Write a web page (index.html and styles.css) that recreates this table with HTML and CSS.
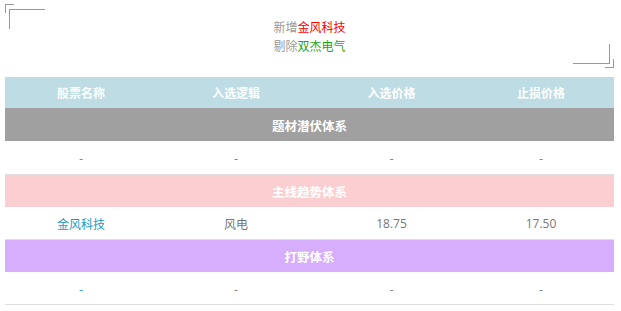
FILE: index.html
```html
<!DOCTYPE html>
<html lang="zh-CN">
<head>
<meta charset="utf-8">
<link rel="stylesheet" href="styles.css">
</head>
<body>
<div class="page">
  <div class="notice">
    <span class="corner corner-tl-small"></span>
    <span class="corner corner-tl"></span>
    <span class="corner corner-br"></span>
    <span class="corner corner-br-small"></span>
    <p class="line"><span class="muted">新增</span><span class="add">金风科技</span></p>
    <p class="line"><span class="muted">剔除</span><span class="remove">双杰电气</span></p>
  </div>
  <table class="stocks">
    <colgroup>
      <col class="c1"><col class="c2"><col class="c3"><col class="c4">
    </colgroup>
    <thead>
      <tr class="head">
        <th>股票名称</th><th>入选逻辑</th><th>入选价格</th><th>止损价格</th>
      </tr>
    </thead>
    <tbody>
      <tr class="cat cat-gray"><td colspan="4">题材潜伏体系</td></tr>
      <tr class="data first"><td class="name">-</td><td>-</td><td>-</td><td>-</td></tr>
      <tr class="cat cat-pink"><td colspan="4">主线趋势体系</td></tr>
      <tr class="data"><td class="name">金风科技</td><td>风电</td><td class="num">18.75</td><td class="num">17.50</td></tr>
      <tr class="cat cat-purple"><td colspan="4">打野体系</td></tr>
      <tr class="data"><td class="name">-</td><td>-</td><td>-</td><td>-</td></tr>
    </tbody>
  </table>
</div>
</body>
</html>
```
FILE: styles.css
```css
html, body {
  margin: 0;
  padding: 0;
  background: #fff;
}
body {
  font-family: "Noto Sans CJK SC", "Open Sans", sans-serif;
  font-size: 12px;
  color: #666;
}
.page {
  padding: 4px 7px 0 5px;
}
.notice {
  position: relative;
  height: 64px;
  display: flex;
  flex-direction: column;
  justify-content: center;
  align-items: center;
}
.line {
  margin: 0;
  line-height: 19px;
  font-size: 12px;
}
.muted { color: #999; }
.add { color: #ff0000; }
.remove { color: #1aa51a; }
.corner {
  position: absolute;
  border-color: #999;
  border-style: solid;
  border-width: 0;
}
.corner-tl-small {
  left: 0; top: 0;
  width: 8px; height: 8px;
  border-top-width: 1px; border-left-width: 1px;
}
.corner-tl {
  left: 4px; top: 5px;
  width: 35px; height: 19px;
  border-top-width: 1px; border-left-width: 1px;
}
.corner-br {
  right: 4px; bottom: 4px;
  width: 36px; height: 19px;
  border-bottom-width: 1px; border-right-width: 1px;
}
.corner-br-small {
  right: 0; bottom: 0;
  width: 8px; height: 8px;
  border-bottom-width: 1px; border-right-width: 1px;
}
.stocks {
  margin-top: 9px;
  width: 100%;
  border-collapse: collapse;
  table-layout: fixed;
}
.c1 { width: 152px; }
.c2 { width: 158px; }
.c3 { width: 153px; }
.c4 { width: auto; }
.stocks th, .stocks td {
  padding: 0;
  text-align: center;
}
.head th {
  height: 31px;
  background: #bddce3;
  color: #fff;
  font-weight: bold;
  font-size: 12px;
  border-bottom: 1px solid #a0a0a0;
}
.cat td {
  height: 32px;
  color: #fff;
  font-weight: bold;
  font-size: 12.5px;
}
.cat-gray td { background: #a0a0a0; }
.cat-pink td { background: #fbcfd1; }
.cat-purple td { background: #d7aefb; }
.data td {
  height: 32px;
  border-bottom: 1px solid #dedede;
  color: #777;
  font-size: 12px;
}
.data.first td { height: 33px; }
.data td.name { color: #1a9bc4; }
.data td.num { color: #777; font-family: "Open Sans", "Noto Sans CJK SC", sans-serif; }
```
